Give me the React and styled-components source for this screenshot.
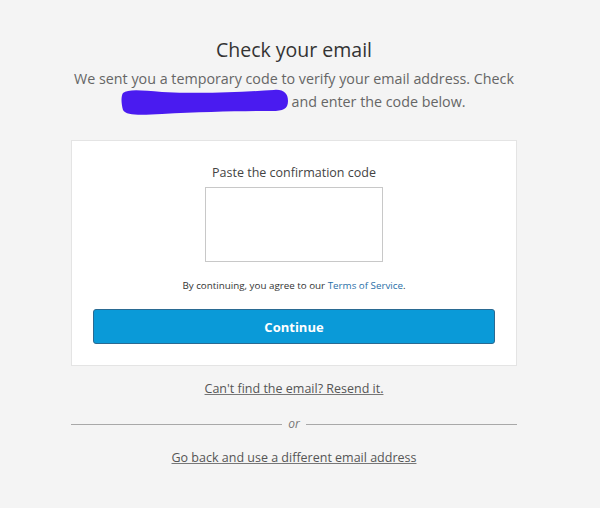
import React from 'react';
import styled, { createGlobalStyle } from 'styled-components';

const GlobalStyle = createGlobalStyle`
  html, body {
    margin: 0;
    padding: 0;
    background: #f4f4f4;
    font-family: 'Open Sans', 'Liberation Sans', sans-serif;
  }
`;

const Page = styled.div`
  width: 600px;
  height: 508px;
  padding-right: 12px;
  box-sizing: border-box;
  background: #f4f4f4;
  overflow: hidden;
`;

const Column = styled.div`
  width: 446px;
  margin: 0 auto;
  padding-top: 36px;
  display: flex;
  flex-direction: column;
  align-items: center;
`;

const Title = styled.h1`
  margin: 0;
  font-size: 19.5px;
  font-weight: 400;
  color: #333;
  line-height: 28px;
`;

const Lead = styled.p`
  margin: 3px 0 0;
  width: 470px;
  text-align: center;
  font-size: 14.3px;
  line-height: 23px;
  color: #666;
`;

const Redacted = styled.span`
  display: inline-block;
  width: 166px;
  height: 23px;
  vertical-align: top;
  margin-right: 3px;
  svg {
    display: block;
    overflow: visible;
  }
`;

const Card = styled.div`
  margin-top: 27px;
  width: 100%;
  box-sizing: border-box;
  background: #fff;
  border: 1px solid #e4e4e4;
  padding: 23px 22px 21px;
  display: flex;
  flex-direction: column;
  align-items: center;
`;

const Label = styled.label`
  font-size: 12.5px;
  color: #444;
  line-height: 18px;
`;

const CodeBox = styled.textarea`
  margin-top: 5px;
  width: 178px;
  height: 75px;
  box-sizing: border-box;
  border: 1px solid #c8c8c8;
  background: #fff;
  resize: none;
  outline: none;
`;

const Agree = styled.p`
  margin: 17px 0 0;
  font-size: 9.8px;
  color: #333;
  line-height: 14px;
`;

const TermsLink = styled.a`
  color: #2a6fa8;
  text-decoration: none;
`;

const Button = styled.button`
  margin-top: 16px;
  width: 402px;
  height: 35px;
  border: 1px solid #2a6a92;
  border-radius: 3px;
  background: #0a9ad8;
  color: #fff;
  font-family: inherit;
  font-size: 13px;
  font-weight: 700;
`;

const TextLink = styled.a`
  margin-top: ${p => p.$top}px;
  font-size: 12.5px;
  color: #555;
  text-decoration: underline;
  text-decoration-color: #777;
  line-height: 18px;
`;

const Divider = styled.div`
  margin-top: 18px;
  width: 100%;
  display: flex;
  align-items: center;
  gap: 6px;
  &::before,
  &::after {
    content: '';
    flex: 1;
    height: 1px;
    background: #a8a8a8;
  }
`;

const Or = styled.span`
  font-size: 12px;
  font-style: italic;
  color: #777;
  line-height: 16px;
`;

export default function App() {
  return (
    <Page>
      <GlobalStyle />
      <Column>
        <Title>Check your email</Title>
        <Lead>
          We sent you a temporary code to verify your email address. Check{' '}
          <Redacted>
            <svg width="166" height="24" viewBox="0 0 166 24">
              <path
                d="M1 3 C6 -1 18 0 40 2 C80 4 120 2 152 0 C161 -1 166 3 166 11 C166 19 161 21 150 21 C120 21 80 22 40 24 C20 25 4 26 1 20 C-1 13 -1 6 1 3 Z"
                fill="#4a1bf0"
              />
            </svg>
          </Redacted>
          and enter the code below.
        </Lead>
        <Card>
          <Label>Paste the confirmation code</Label>
          <CodeBox />
          <Agree>
            By continuing, you agree to our <TermsLink>Terms of Service</TermsLink>.
          </Agree>
          <Button>Continue</Button>
        </Card>
        <TextLink $top={14}>Can't find the email? Resend it.</TextLink>
        <Divider>
          <Or>or</Or>
        </Divider>
        <TextLink $top={17}>Go back and use a different email address</TextLink>
      </Column>
    </Page>
  );
}
